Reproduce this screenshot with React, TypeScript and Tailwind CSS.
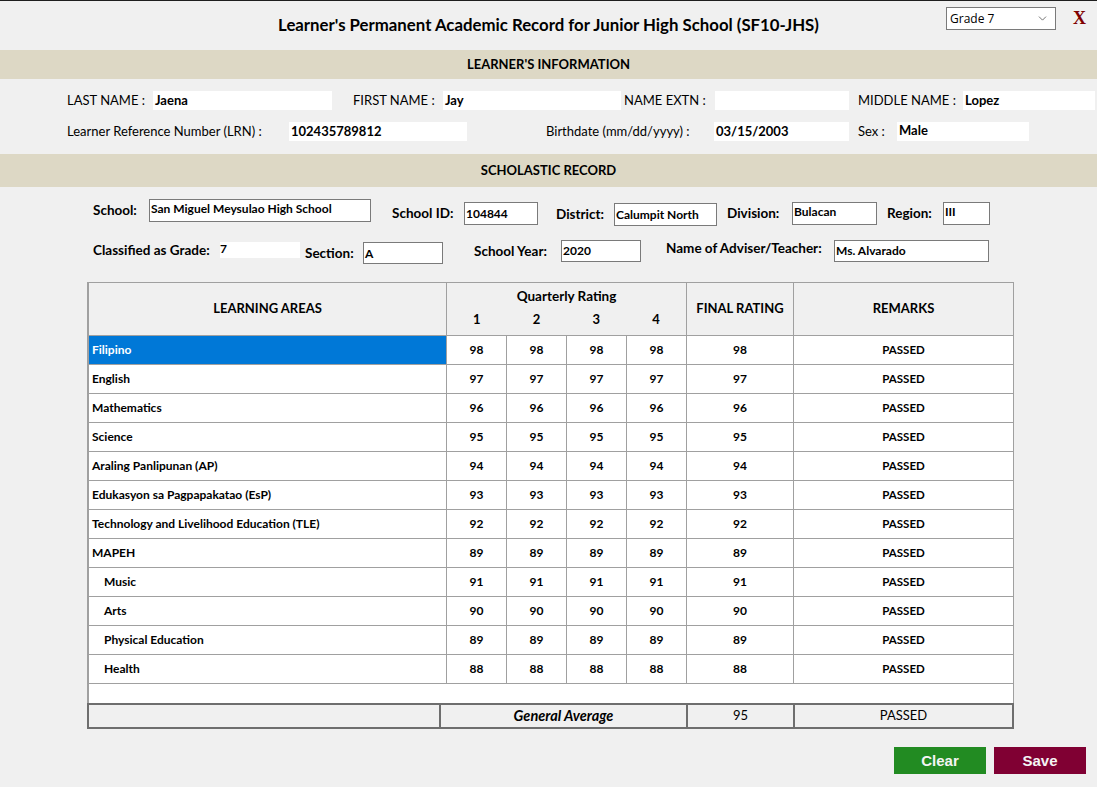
import { ChevronDown } from "lucide-react";

/**
 * One learning area row of the scholastic record
 */
interface Subject {
  name: string;
  q: number[];
  final: number;
  sub?: boolean;
}

const subjects: Subject[] = [
  { name: "Filipino", q: [98, 98, 98, 98], final: 98 },
  { name: "English", q: [97, 97, 97, 97], final: 97 },
  { name: "Mathematics", q: [96, 96, 96, 96], final: 96 },
  { name: "Science", q: [95, 95, 95, 95], final: 95 },
  { name: "Araling Panlipunan (AP)", q: [94, 94, 94, 94], final: 94 },
  { name: "Edukasyon sa Pagpapakatao (EsP)", q: [93, 93, 93, 93], final: 93 },
  { name: "Technology and Livelihood Education (TLE)", q: [92, 92, 92, 92], final: 92 },
  { name: "MAPEH", q: [89, 89, 89, 89], final: 89 },
  { name: "Music", q: [91, 91, 91, 91], final: 91, sub: true },
  { name: "Arts", q: [90, 90, 90, 90], final: 90, sub: true },
  { name: "Physical Education", q: [89, 89, 89, 89], final: 89, sub: true },
  { name: "Health", q: [88, 88, 88, 88], final: 88, sub: true },
];

export default function App() {
  return (
    <div className="w-[1097px] h-[787px] overflow-hidden bg-[#f0f0f0] border-t border-[#1e1e1e] font-['Lato','Open_Sans',sans-serif] text-black">
      {/* Title bar */}
      <div className="h-[49px] grid grid-cols-[1fr_auto_1fr]">
        <div />
        <h1 className="pt-[14px] text-[16.8px] font-bold leading-[20px] whitespace-nowrap">
          Learner's Permanent Academic Record for Junior High School (SF10-JHS)
        </h1>
        <div className="flex justify-end items-start pt-[6px] pr-[11px]">
          <div className="w-[110px] h-[23px] bg-white border border-[#7a7a7a] flex items-center justify-between pl-[3px] pr-[6px] text-[12px] font-['Open_Sans',sans-serif]">
            <span>Grade 7</span>
            <ChevronDown className="w-[13px] h-[13px] text-[#555]" strokeWidth={1.5} />
          </div>
          <span className="ml-[17px] mt-[1px] text-[18px] leading-[20px] font-bold text-[#800000] font-['Liberation_Serif',serif]">
            X
          </span>
        </div>
      </div>

      {/* Learner's information */}
      <div className="h-[29px] bg-[#ddd8c5] flex items-center justify-center text-[13px] font-bold">
        LEARNER'S INFORMATION
      </div>
      <div className="pt-[12px] pb-[13px] pl-[67px] flex flex-col gap-[12px] text-[13px]">
        <div className="flex items-center h-[19px]">
          <span className="w-[86px] whitespace-nowrap">LAST NAME :</span>
          <div className="w-[179px] h-[19px] bg-white pl-[2px] font-bold leading-[19px]">Jaena</div>
          <span className="ml-[21px] w-[90px] whitespace-nowrap">FIRST NAME :</span>
          <div className="w-[178px] h-[19px] bg-white pl-[2px] font-bold leading-[19px]">Jay</div>
          <span className="ml-[3px] w-[91px] whitespace-nowrap">NAME EXTN :</span>
          <div className="w-[134px] h-[19px] bg-white" />
          <span className="ml-[9px] w-[105px] whitespace-nowrap">MIDDLE NAME :</span>
          <div className="w-[132px] h-[19px] bg-white pl-[2px] font-bold leading-[19px]">Lopez</div>
        </div>
        <div className="flex items-center h-[19px]">
          <span className="w-[222px] whitespace-nowrap">Learner Reference Number (LRN) :</span>
          <div className="w-[178px] h-[19px] bg-white pl-[2px] font-bold leading-[19px]">102435789812</div>
          <span className="ml-[79px] w-[168px] whitespace-nowrap">Birthdate (mm/dd/yyyy) :</span>
          <div className="w-[135px] h-[19px] bg-white pl-[2px] font-bold leading-[19px]">03/15/2003</div>
          <span className="ml-[9px] w-[39px] whitespace-nowrap">Sex :</span>
          <div className="w-[132px] h-[19px] bg-white pl-[2px] font-bold leading-[17px]">Male</div>
        </div>
      </div>

      {/* Scholastic record */}
      <div className="h-[33px] bg-[#ddd8c5] flex items-center justify-center text-[13px] font-bold">
        SCHOLASTIC RECORD
      </div>
      <div className="pl-[93px] pt-[12px] text-[13.5px] font-bold">
        <div className="flex items-start">
          <div className="flex items-center">
            <span className="w-[56px]">School:</span>
            <div className="w-[222px] h-[23px] bg-white border border-[#7a7a7a] pl-[1px] text-[12px] leading-[18px]">
              San Miguel Meysulao High School
            </div>
          </div>
          <div className="flex items-center ml-[21px] mt-[3px]">
            <span className="w-[72px]">School ID:</span>
            <div className="w-[74px] h-[23px] bg-white border border-[#7a7a7a] pl-[1px] text-[12px] leading-[21px]">104844</div>
          </div>
          <div className="flex items-center ml-[18px] mt-[4px]">
            <span className="w-[58px]">District:</span>
            <div className="w-[103px] h-[23px] bg-white border border-[#7a7a7a] pl-[1px] text-[12px] leading-[21px]">Calumpit North</div>
          </div>
          <div className="flex items-center ml-[10px] mt-[3px]">
            <span className="w-[65px]">Division:</span>
            <div className="w-[85px] h-[23px] bg-white border border-[#7a7a7a] pl-[1px] text-[12px] leading-[17px]">Bulacan</div>
          </div>
          <div className="flex items-center ml-[10px] mt-[3px]">
            <span className="w-[56px]">Region:</span>
            <div className="w-[47px] h-[23px] bg-white border border-[#7a7a7a] pl-[1px] text-[12px] leading-[17px]">III</div>
          </div>
        </div>
        <div className="flex items-start mt-[14px]">
          <div className="flex items-center">
            <span className="w-[127px] whitespace-nowrap">Classified as Grade:</span>
            <div className="w-[80px] h-[16px] bg-white text-[12px] leading-[14px]">7</div>
          </div>
          <div className="flex items-center ml-[5px] mt-[2px]">
            <span className="w-[58px]">Section:</span>
            <div className="w-[80px] h-[22px] bg-white border border-[#7a7a7a] pl-[1px] text-[12px] leading-[22px]">A</div>
          </div>
          <div className="flex items-center ml-[31px]">
            <span className="w-[87px] whitespace-nowrap">School Year:</span>
            <div className="w-[80px] h-[22px] bg-white border border-[#7a7a7a] pl-[1px] text-[12px] leading-[20px]">2020</div>
          </div>
          <div className="flex items-start ml-[25px]">
            <span className="w-[168px] whitespace-nowrap leading-[16px]">Name of Adviser/Teacher:</span>
            <div className="w-[155px] h-[22px] bg-white border border-[#7a7a7a] pl-[1px] text-[12px] leading-[20px]">Ms. Alvarado</div>
          </div>
        </div>
      </div>

      {/* Grades table */}
      <div className="ml-[87px] mt-[18px] w-[927px] text-[12px] font-bold">
        <div className="border-t border-r border-l-2 border-[#a0a0a0] bg-white">
          <div className="grid grid-cols-[358px_240px_107px_1fr] h-[53px] bg-[#f0f0f0] border-b border-[#a0a0a0]">
            <div className="border-r border-[#a0a0a0] flex items-center justify-center text-[13px] pb-[1px]">LEARNING AREAS</div>
            <div className="border-r border-[#a0a0a0] flex flex-col items-center">
              <div className="pt-[5px] text-[13.5px] leading-[16px]">Quarterly Rating</div>
              <div className="grid grid-cols-4 w-full mt-[7px] text-[13px] leading-[16px] text-center">
                <span>1</span>
                <span>2</span>
                <span>3</span>
                <span>4</span>
              </div>
            </div>
            <div className="border-r border-[#a0a0a0] flex items-center justify-center text-[13px] pb-[1px]">FINAL RATING</div>
            <div className="flex items-center justify-center text-[13px] pb-[1px]">REMARKS</div>
          </div>
          {subjects.map((s, i) => (
            <div key={s.name} className="grid grid-cols-[358px_60px_60px_60px_60px_107px_1fr] h-[29px] border-b border-[#a0a0a0]">
              <div
                className={
                  "border-r border-[#a0a0a0] flex items-center " +
                  (s.sub ? "pl-[15px] " : "pl-[3px] ") +
                  (i === 0 ? "bg-[#0078d7] text-white" : "")
                }
              >
                {s.name}
              </div>
              {s.q.map((g, j) => (
                <div key={j} className="border-r border-[#a0a0a0] flex items-center justify-center">
                  {g}
                </div>
              ))}
              <div className="border-r border-[#a0a0a0] flex items-center justify-center">{s.final}</div>
              <div className="flex items-center justify-center text-[11.5px]">PASSED</div>
            </div>
          ))}
          <div className="h-[19px]" />
        </div>
        <div className="grid grid-cols-[352px_247px_107px_1fr] h-[26px] border-2 border-[#6e6e6e] bg-[#f0f0f0] text-[13px]">
          <div className="border-r-2 border-[#6e6e6e]" />
          <div className="border-r-2 border-[#6e6e6e] flex items-center justify-center italic text-[14.5px]">General Average</div>
          <div className="border-r-2 border-[#6e6e6e] flex items-center justify-center font-normal">95</div>
          <div className="flex items-center justify-center font-normal">PASSED</div>
        </div>
      </div>

      {/* Actions */}
      <div className="flex justify-end gap-[8px] pr-[11px] mt-[18px] font-['Liberation_Sans',Arial,sans-serif] text-[15px] font-bold text-[#f4f4f4]">
        <button className="w-[92px] h-[27px] bg-[#228b22] pt-[2px]">Clear</button>
        <button className="w-[92px] h-[27px] bg-[#800033] pt-[2px]">Save</button>
      </div>
    </div>
  );
}
